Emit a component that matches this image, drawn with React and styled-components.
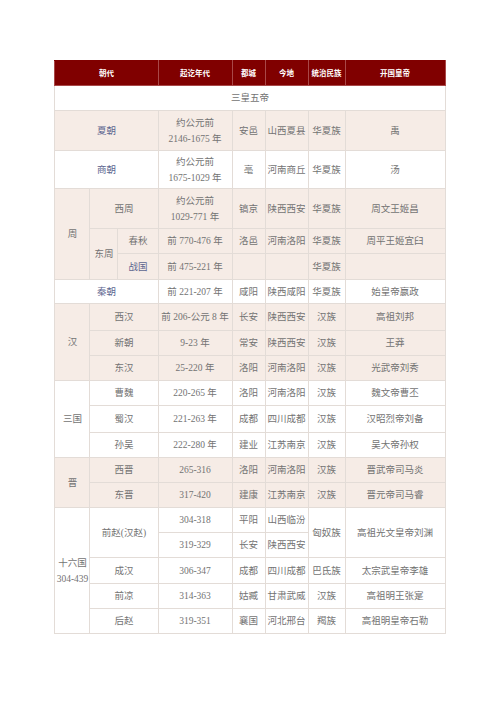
import React from "react"
import styled, { createGlobalStyle } from "styled-components"

const GlobalStyle = createGlobalStyle`
  html, body {
    margin: 0;
    padding: 0;
    background: #ffffff;
  }
`

const Page = styled.div`
  width: 500px;
  height: 707px;
  padding-top: 60px;
  box-sizing: border-box;
`

const Table = styled.table`
  width: 390px;
  margin: 0 auto;
  table-layout: fixed;
  border-collapse: collapse;
  font-family: "Liberation Serif", "Noto Sans CJK SC", serif;
  font-size: 9.5px;
  line-height: 16px;
  color: #737373;
  border: 1px solid #e3dcd7;
`

const HeadRow = styled.tr`
  height: 25px;
  background: #800000;
`

const HeadCell = styled.th`
  padding: 0;
  font-family: "Noto Sans CJK SC", sans-serif;
  font-size: 7.5px;
  font-weight: 700;
  color: #ffffff;
  text-align: center;
  vertical-align: middle;
  border: 1px solid #a94848;
  border-top-color: #800000;
`

const Row = styled.tr`
  height: ${(p) => p.$h || 25}px;
  background: ${(p) => (p.$tone ? "#f6ece6" : "#ffffff")};
`

const Cell = styled.td`
  padding: 0;
  text-align: center;
  vertical-align: middle;
  white-space: nowrap;
  border: 1px solid #e3dcd7;
  color: ${(p) => (p.$link ? "#5d6690" : "#737373")};
`

const widths = [35, 28, 40, 74, 33, 43, 37, 100]

export default function App() {
  return (
    <>
      <GlobalStyle />
      <Page>
        <Table>
          <colgroup>
            {widths.map((w, i) => (
              <col key={i} style={{ width: w }} />
            ))}
          </colgroup>
          <thead>
            <HeadRow>
              <HeadCell colSpan={3}>朝代</HeadCell>
              <HeadCell>起讫年代</HeadCell>
              <HeadCell>都城</HeadCell>
              <HeadCell>今地</HeadCell>
              <HeadCell>统治民族</HeadCell>
              <HeadCell>开国皇帝</HeadCell>
            </HeadRow>
          </thead>
          <tbody>
            <Row>
              <Cell colSpan={8}>三皇五帝</Cell>
            </Row>

            <Row $tone $h={40}>
              <Cell colSpan={3} $link>夏朝</Cell>
              <Cell>约公元前<br />2146-1675 年</Cell>
              <Cell>安邑</Cell>
              <Cell>山西夏县</Cell>
              <Cell>华夏族</Cell>
              <Cell>禹</Cell>
            </Row>
            <Row $h={38}>
              <Cell colSpan={3} $link>商朝</Cell>
              <Cell>约公元前<br />1675-1029 年</Cell>
              <Cell>亳</Cell>
              <Cell>河南商丘</Cell>
              <Cell>华夏族</Cell>
              <Cell>汤</Cell>
            </Row>

            <Row $tone $h={40}>
              <Cell rowSpan={3}>周</Cell>
              <Cell colSpan={2}>西周</Cell>
              <Cell>约公元前<br />1029-771 年</Cell>
              <Cell>镐京</Cell>
              <Cell>陕西西安</Cell>
              <Cell>华夏族</Cell>
              <Cell>周文王姬昌</Cell>
            </Row>
            <Row $tone>
              <Cell rowSpan={2}>东周</Cell>
              <Cell>春秋</Cell>
              <Cell>前 770-476 年</Cell>
              <Cell>洛邑</Cell>
              <Cell>河南洛阳</Cell>
              <Cell>华夏族</Cell>
              <Cell>周平王姬宜臼</Cell>
            </Row>
            <Row $tone $h={26}>
              <Cell $link>战国</Cell>
              <Cell>前 475-221 年</Cell>
              <Cell />
              <Cell />
              <Cell>华夏族</Cell>
              <Cell />
            </Row>

            <Row $h={24}>
              <Cell colSpan={3} $link>秦朝</Cell>
              <Cell>前 221-207 年</Cell>
              <Cell>咸阳</Cell>
              <Cell>陕西咸阳</Cell>
              <Cell>华夏族</Cell>
              <Cell>始皇帝嬴政</Cell>
            </Row>

            <Row $tone $h={27}>
              <Cell rowSpan={3}>汉</Cell>
              <Cell colSpan={2}>西汉</Cell>
              <Cell>前 206-公元 8 年</Cell>
              <Cell>长安</Cell>
              <Cell>陕西西安</Cell>
              <Cell>汉族</Cell>
              <Cell>高祖刘邦</Cell>
            </Row>
            <Row $tone>
              <Cell colSpan={2}>新朝</Cell>
              <Cell>9-23 年</Cell>
              <Cell>常安</Cell>
              <Cell>陕西西安</Cell>
              <Cell>汉族</Cell>
              <Cell>王莽</Cell>
            </Row>
            <Row $tone>
              <Cell colSpan={2}>东汉</Cell>
              <Cell>25-220 年</Cell>
              <Cell>洛阳</Cell>
              <Cell>河南洛阳</Cell>
              <Cell>汉族</Cell>
              <Cell>光武帝刘秀</Cell>
            </Row>

            <Row>
              <Cell rowSpan={3}>三国</Cell>
              <Cell colSpan={2}>曹魏</Cell>
              <Cell>220-265 年</Cell>
              <Cell>洛阳</Cell>
              <Cell>河南洛阳</Cell>
              <Cell>汉族</Cell>
              <Cell>魏文帝曹丕</Cell>
            </Row>
            <Row $h={27}>
              <Cell colSpan={2}>蜀汉</Cell>
              <Cell>221-263 年</Cell>
              <Cell>成都</Cell>
              <Cell>四川成都</Cell>
              <Cell>汉族</Cell>
              <Cell>汉昭烈帝刘备</Cell>
            </Row>
            <Row>
              <Cell colSpan={2}>孙吴</Cell>
              <Cell>222-280 年</Cell>
              <Cell>建业</Cell>
              <Cell>江苏南京</Cell>
              <Cell>汉族</Cell>
              <Cell>吴大帝孙权</Cell>
            </Row>

            <Row $tone>
              <Cell rowSpan={2}>晋</Cell>
              <Cell colSpan={2}>西晋</Cell>
              <Cell>265-316</Cell>
              <Cell>洛阳</Cell>
              <Cell>河南洛阳</Cell>
              <Cell>汉族</Cell>
              <Cell>晋武帝司马炎</Cell>
            </Row>
            <Row $tone>
              <Cell colSpan={2}>东晋</Cell>
              <Cell>317-420</Cell>
              <Cell>建康</Cell>
              <Cell>江苏南京</Cell>
              <Cell>汉族</Cell>
              <Cell>晋元帝司马睿</Cell>
            </Row>

            <Row>
              <Cell rowSpan={5}>十六国<br />304-439</Cell>
              <Cell colSpan={2} rowSpan={2}>前赵(汉赵)</Cell>
              <Cell>304-318</Cell>
              <Cell>平阳</Cell>
              <Cell>山西临汾</Cell>
              <Cell rowSpan={2}>匈奴族</Cell>
              <Cell rowSpan={2}>高祖光文皇帝刘渊</Cell>
            </Row>
            <Row>
              <Cell>319-329</Cell>
              <Cell>长安</Cell>
              <Cell>陕西西安</Cell>
            </Row>
            <Row $h={26}>
              <Cell colSpan={2}>成汉</Cell>
              <Cell>306-347</Cell>
              <Cell>成都</Cell>
              <Cell>四川成都</Cell>
              <Cell>巴氐族</Cell>
              <Cell>太宗武皇帝李雄</Cell>
            </Row>
            <Row>
              <Cell colSpan={2}>前凉</Cell>
              <Cell>314-363</Cell>
              <Cell>姑臧</Cell>
              <Cell>甘肃武威</Cell>
              <Cell>汉族</Cell>
              <Cell>高祖明王张寔</Cell>
            </Row>
            <Row>
              <Cell colSpan={2}>后赵</Cell>
              <Cell>319-351</Cell>
              <Cell>襄国</Cell>
              <Cell>河北邢台</Cell>
              <Cell>羯族</Cell>
              <Cell>高祖明皇帝石勒</Cell>
            </Row>
          </tbody>
        </Table>
      </Page>
    </>
  )
}
